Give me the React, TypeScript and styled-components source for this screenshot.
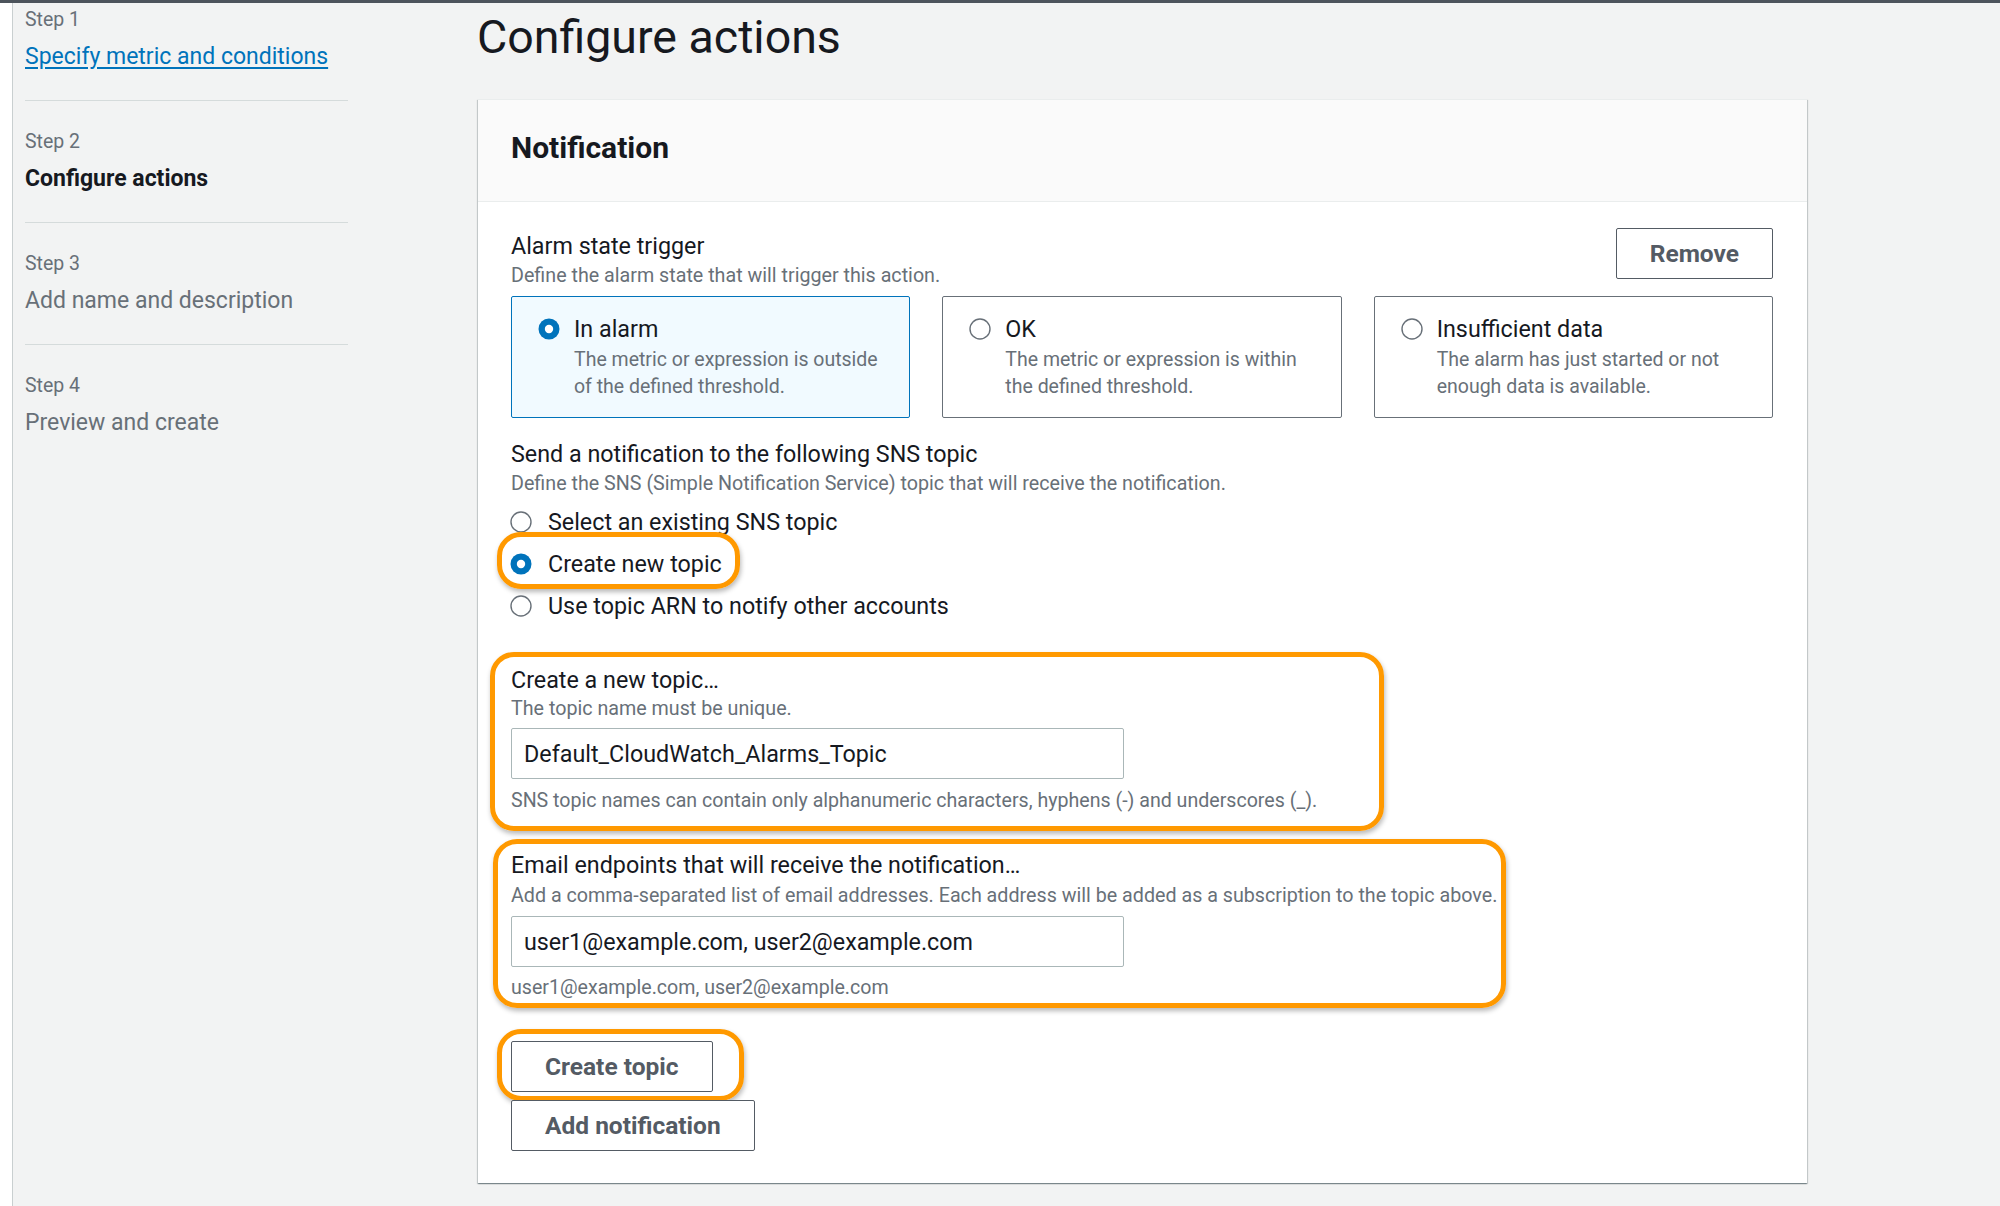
import React from "react";
import styled, { createGlobalStyle, css } from "styled-components";

const GlobalStyle = createGlobalStyle`
  html, body {
    margin: 0;
    padding: 0;
  }
  body {
    width: 2000px;
    height: 1206px;
    overflow: hidden;
    background: #f2f3f3;
    font-family: Roboto, "Liberation Sans", Arial, sans-serif;
    color: #16191f;
  }
  * {
    box-sizing: border-box;
  }
`;

const steps = [
  { label: "Step 1", title: "Specify metric and conditions", state: "link" },
  { label: "Step 2", title: "Configure actions", state: "current" },
  { label: "Step 3", title: "Add name and description", state: "disabled" },
  { label: "Step 4", title: "Preview and create", state: "disabled" },
] as const;

const triggers = [
  {
    title: "In alarm",
    lines: ["The metric or expression is outside", "of the defined threshold."],
    selected: true,
  },
  {
    title: "OK",
    lines: ["The metric or expression is within", "the defined threshold."],
    selected: false,
  },
  {
    title: "Insufficient data",
    lines: ["The alarm has just started or not", "enough data is available."],
    selected: false,
  },
];

const Radio = ({ checked }: { checked?: boolean }) => (
  <RadioSvg viewBox="0 0 22 22" width={22} height={22}>
    {checked ? (
      <>
        <circle cx="11" cy="11" r="10.5" fill="#0073bb" />
        <circle cx="11" cy="11" r="4.2" fill="#ffffff" />
      </>
    ) : (
      <circle cx="11" cy="11" r="10" fill="#ffffff" stroke="#687078" strokeWidth="1.4" />
    )}
  </RadioSvg>
);

const App = () => {
  return (
    <Page>
      <GlobalStyle />
      <Rail />
      <Nav>
        <StepList>
          {steps.map((s) => (
            <StepItem key={s.label}>
              <StepLabel>{s.label}</StepLabel>
              <StepTitle $state={s.state}>{s.title}</StepTitle>
            </StepItem>
          ))}
        </StepList>
      </Nav>
      <Main>
        <PageTitle>Configure actions</PageTitle>
        <Card>
          <CardHeader>
            <CardTitle>Notification</CardTitle>
          </CardHeader>
          <CardBody>
            <TriggerHead>
              <FieldText>
                <Label>Alarm state trigger</Label>
                <Desc>Define the alarm state that will trigger this action.</Desc>
              </FieldText>
              <Button>Remove</Button>
            </TriggerHead>
            <StateGrid>
              {triggers.map((t) => (
                <StateCard key={t.title} $selected={t.selected}>
                  <RadioSlot>
                    <Radio checked={t.selected} />
                  </RadioSlot>
                  <div>
                    <StateTitle>{t.title}</StateTitle>
                    <StateDesc>
                      {t.lines[0]}
                      <br />
                      {t.lines[1]}
                    </StateDesc>
                  </div>
                </StateCard>
              ))}
            </StateGrid>

            <SectionLabel>Send a notification to the following SNS topic</SectionLabel>
            <Desc>Define the SNS (Simple Notification Service) topic that will receive the notification.</Desc>
            <RadioList>
              <RadioRow>
                <Radio />
                Select an existing SNS topic
              </RadioRow>
              <RadioRow>
                <Radio checked />
                Create new topic
                <Highlight style={{ left: -13, top: -11, width: 243, height: 57 }} />
              </RadioRow>
              <RadioRow>
                <Radio />
                Use topic ARN to notify other accounts
              </RadioRow>
            </RadioList>

            <TopicSection>
              <Label>Create a new topic…</Label>
              <Desc $top={1}>The topic name must be unique.</Desc>
              <TextInput readOnly value="Default_CloudWatch_Alarms_Topic" $top={6} />
              <Constraint>
                SNS topic names can contain only alphanumeric characters, hyphens (-) and underscores (_).
              </Constraint>
              <Highlight style={{ left: -21, top: -13, width: 894, height: 179 }} />
            </TopicSection>

            <EmailSection>
              <Label>Email endpoints that will receive the notification…</Label>
              <Desc $top={3}>
                Add a comma-separated list of email addresses. Each address will be added as a subscription to the topic
                above.
              </Desc>
              <TextInput readOnly value="user1@example.com, user2@example.com" $top={7} />
              <Helper>user1@example.com, user2@example.com</Helper>
              <Highlight style={{ left: -18, top: -11, width: 1013, height: 169 }} />
            </EmailSection>

            <ButtonStack>
              <ButtonWrap>
                <Button>Create topic</Button>
                <Highlight style={{ left: -14, top: -12, width: 247, height: 72 }} />
              </ButtonWrap>
              <ButtonWrap>
                <Button>Add notification</Button>
              </ButtonWrap>
            </ButtonStack>
          </CardBody>
        </Card>
      </Main>
    </Page>
  );
};

export default App;

const Page = styled.div`
  display: flex;
  width: 2000px;
  height: 1206px;
  border-top: 3px solid #4d545c;
  background: #f2f3f3;
`;

const Rail = styled.div`
  width: 13px;
  flex-shrink: 0;
  background: #ffffff;
  border-right: 1px solid #c9cfd0;
`;

const Nav = styled.nav`
  width: 335px;
  flex-shrink: 0;
  padding-left: 12px;
`;

const StepList = styled.ul`
  list-style: none;
  margin: 0;
  padding: 0;
`;

const StepItem = styled.li`
  padding: 29px 0 28px;
  border-top: 1px solid #d5dbdb;

  &:first-child {
    border-top: none;
    padding-top: 5px;
  }
`;

const StepLabel = styled.div`
  font-size: 19.5px;
  line-height: 24px;
  color: #687078;
`;

const StepTitle = styled.div<{ $state: "link" | "current" | "disabled" }>`
  margin-top: 10px;
  font-size: 23px;
  line-height: 30px;
  color: #687078;

  ${({ $state }) =>
    $state === "link" &&
    css`
      color: #0073bb;
      text-decoration: underline;
      text-underline-offset: 3px;
    `}
  ${({ $state }) =>
    $state === "current" &&
    css`
      color: #16191f;
      font-weight: 700;
    `}
`;

const Main = styled.main`
  width: 1329px;
  margin-left: 130px;
  padding-top: 8px;
`;

const PageTitle = styled.h1`
  margin: 0 0 36px -1px;
  font-size: 46.5px;
  line-height: 52px;
  font-weight: 400;
  color: #16191f;
`;

const Card = styled.section`
  background: #ffffff;
  border-top: 1px solid #eaeded;
  box-shadow: 0 1px 1px 0 rgba(0, 28, 36, 0.3), 1px 1px 1px 0 rgba(0, 28, 36, 0.15),
    -1px 1px 1px 0 rgba(0, 28, 36, 0.15);
`;

const CardHeader = styled.header`
  background: #fafafa;
  padding: 30px 33px 35px;
  border-bottom: 1px solid #eaeded;
`;

const CardTitle = styled.h2`
  margin: 0;
  font-size: 30px;
  line-height: 36px;
  font-weight: 700;
  color: #16191f;
`;

const CardBody = styled.div`
  padding: 26px 34px 32px 33px;
`;

const TriggerHead = styled.div`
  display: flex;
  justify-content: space-between;
  align-items: flex-start;
`;

const FieldText = styled.div`
  padding-top: 3px;
`;

const Label = styled.div`
  font-size: 23.3px;
  line-height: 30px;
  color: #16191f;
`;

const SectionLabel = styled(Label)`
  margin-top: 21px;
`;

const Desc = styled.div<{ $top?: number }>`
  margin-top: ${({ $top }) => $top ?? 2}px;
  font-size: 19.7px;
  line-height: 26px;
  color: #687078;
`;

const Button = styled.button`
  height: 51px;
  padding: 0 33px;
  background: #ffffff;
  border: 1px solid #545b64;
  border-radius: 2px;
  font-family: inherit;
  font-size: 24.5px;
  font-weight: 700;
  color: #545b64;
  cursor: pointer;
`;

const StateGrid = styled.div`
  display: grid;
  grid-template-columns: repeat(3, 1fr);
  gap: 32px;
  margin-top: 7px;
`;

const StateCard = styled.label<{ $selected: boolean }>`
  display: flex;
  gap: 14px;
  padding: 17px 20px 17px 26px;
  border: 1px solid ${({ $selected }) => ($selected ? "#0073bb" : "#687078")};
  border-radius: 2px;
  background: ${({ $selected }) => ($selected ? "#f1faff" : "#ffffff")};
`;

const RadioSlot = styled.div`
  height: 30px;
  display: flex;
  align-items: center;
`;

const RadioSvg = styled.svg`
  display: block;
  flex-shrink: 0;
`;

const StateTitle = styled.div`
  font-size: 23.3px;
  line-height: 30px;
  color: #16191f;
`;

const StateDesc = styled.div`
  margin-top: 2px;
  font-size: 19.5px;
  line-height: 27px;
  color: #687078;
`;

const RadioList = styled.div`
  margin-top: 4px;
`;

const RadioRow = styled.label`
  position: relative;
  display: flex;
  align-items: center;
  gap: 16px;
  height: 42px;
  margin-left: -1px;
  font-size: 23.3px;
  line-height: 30px;
  color: #16191f;
`;

const Highlight = styled.span`
  position: absolute;
  border: 5px solid #ff9900;
  border-radius: 24px;
  box-shadow: 1px 3px 5px rgba(0, 0, 0, 0.28);
  pointer-events: none;
`;

const TopicSection = styled.div`
  position: relative;
  margin-top: 38px;
`;

const EmailSection = styled.div`
  position: relative;
  margin-top: 36px;
`;

const TextInput = styled.input<{ $top: number }>`
  display: block;
  width: 613px;
  height: 51px;
  margin-top: ${({ $top }) => $top}px;
  padding: 0 12px;
  border: 1px solid #aab7b8;
  border-radius: 2px;
  background: #ffffff;
  font-family: inherit;
  font-size: 23.3px;
  color: #16191f;
  outline: none;
`;

const Constraint = styled.div`
  margin-top: 9px;
  font-size: 19.6px;
  line-height: 26px;
  color: #687078;
`;

const Helper = styled(Constraint)`
  margin-top: 8px;
`;

const ButtonStack = styled.div`
  display: flex;
  flex-direction: column;
  align-items: flex-start;
  gap: 8px;
  margin-top: 40px;
`;

const ButtonWrap = styled.div`
  position: relative;
`;
